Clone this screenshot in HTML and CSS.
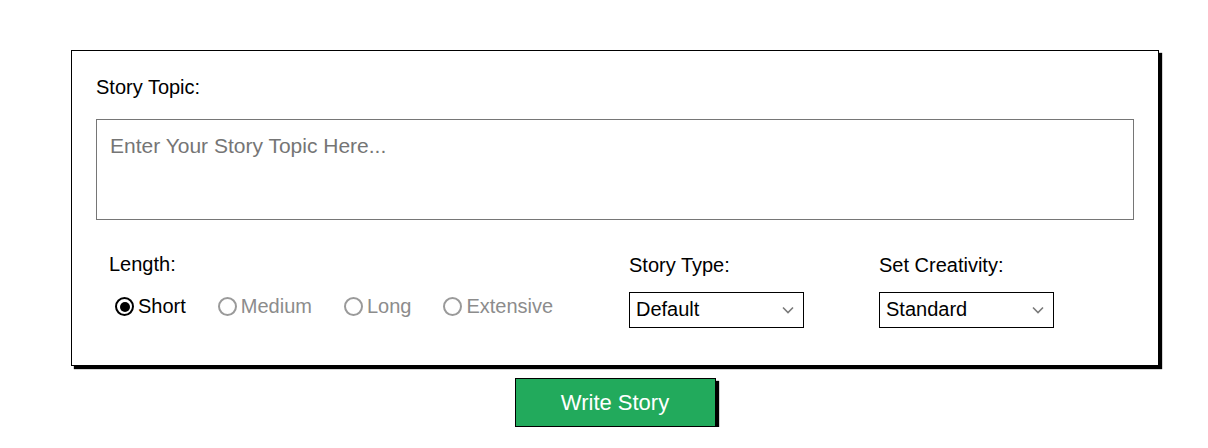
FILE: index.html
```html
<!DOCTYPE html>
<html lang="en">
<head>
<meta charset="utf-8">
<title>Story Writer</title>
<link rel="stylesheet" href="styles.css">
</head>
<body>
<div class="page">
  <form class="card">
    <label class="topic-label" for="topic">Story Topic:</label>
    <textarea id="topic" class="topic-input" placeholder="Enter Your Story Topic Here..."></textarea>
    <div class="options">
      <div class="group group-length">
        <div class="group-label">Length:</div>
        <div class="radios">
          <label class="radio checked"><input type="radio" name="len" checked><span>Short</span></label>
          <label class="radio"><input type="radio" name="len"><span>Medium</span></label>
          <label class="radio"><input type="radio" name="len"><span>Long</span></label>
          <label class="radio"><input type="radio" name="len"><span>Extensive</span></label>
        </div>
      </div>
      <div class="group group-type">
        <div class="group-label">Story Type:</div>
        <div class="select-wrap">
          <select class="select"><option>Default</option></select>
          <svg class="chev" width="12" height="8" viewBox="0 0 12 8"><path d="M1 1.5 L6 6.5 L11 1.5" fill="none" stroke="#7a7a7a" stroke-width="1.6"/></svg>
        </div>
      </div>
      <div class="group group-creativity">
        <div class="group-label">Set Creativity:</div>
        <div class="select-wrap">
          <select class="select"><option>Standard</option></select>
          <svg class="chev" width="12" height="8" viewBox="0 0 12 8"><path d="M1 1.5 L6 6.5 L11 1.5" fill="none" stroke="#7a7a7a" stroke-width="1.6"/></svg>
        </div>
      </div>
    </div>
  </form>
  <button class="write-btn" type="button">Write Story</button>
</div>
</body>
</html>
```

FILE: styles.css
```css
* { box-sizing: border-box; }
html, body { margin: 0; padding: 0; background: #fff; }
body {
  font-family: "Liberation Sans", Arial, sans-serif;
  color: #000;
}
.page {
  display: flex;
  flex-direction: column;
  align-items: center;
  padding: 50px 0 0 22px;
}
.card {
  width: 1088px;
  height: 316px;
  border: 1px solid #000;
  box-shadow: 3px 3px 1px #000;
  padding: 25px 24px 0 24px;
  display: flex;
  flex-direction: column;
  background: #fff;
}
.topic-label {
  font-size: 20px;
  line-height: 23px;
  margin-bottom: 20px;
}
.topic-input {
  display: block;
  width: 100%;
  height: 101px;
  border: 1px solid #767676;
  border-radius: 0;
  padding: 14px 13px;
  font-family: "Liberation Sans", Arial, sans-serif;
  font-size: 21px;
  resize: none;
  outline: none;
}
.topic-input::placeholder { color: #757575; }
.options {
  display: flex;
  margin-top: 33px;
  padding-left: 13px;
}
.group-label {
  font-size: 20px;
  line-height: 23px;
}
.group-length { width: 520px; }
.group-type { width: 250px; padding-top: 1px; }
.group-creativity { padding-top: 1px; }
.radios {
  display: flex;
  margin-top: 19px;
  padding-left: 6px;
  gap: 32px;
}
.radio {
  display: flex;
  align-items: center;
  gap: 4px;
  font-size: 20px;
  line-height: 23px;
  color: #8c8c8c;
}
.radio.checked { color: #000; }
.radio input {
  appearance: none;
  -webkit-appearance: none;
  margin: 0;
  width: 19px;
  height: 19px;
  border: 2px solid #9a9a9a;
  border-radius: 50%;
  background: #fff;
  position: relative;
}
.radio input:checked {
  border-color: #000;
}
.radio input:checked::after {
  content: "";
  position: absolute;
  left: 2.5px;
  top: 2.5px;
  width: 10px;
  height: 10px;
  border-radius: 50%;
  background: #000;
}
.select-wrap {
  position: relative;
  width: 175px;
  margin-top: 15px;
}
.select {
  appearance: none;
  -webkit-appearance: none;
  display: block;
  width: 175px;
  height: 36px;
  border: 1px solid #000;
  border-radius: 0;
  background: #fff;
  color: #000;
  font-family: "Liberation Sans", Arial, sans-serif;
  font-size: 20px;
  padding: 0 0 2px 6px;
  outline: none;
}
.chev {
  position: absolute;
  right: 10px;
  top: 14px;
  pointer-events: none;
}
.write-btn {
  margin-top: 12px;
  width: 201px;
  height: 49px;
  background: #22aa5c;
  color: #fff;
  border: 1px solid #000;
  border-radius: 0;
  box-shadow: 3px 3px 1px #000;
  font-family: "Liberation Sans", Arial, sans-serif;
  font-size: 22px;
  cursor: pointer;
}
```
